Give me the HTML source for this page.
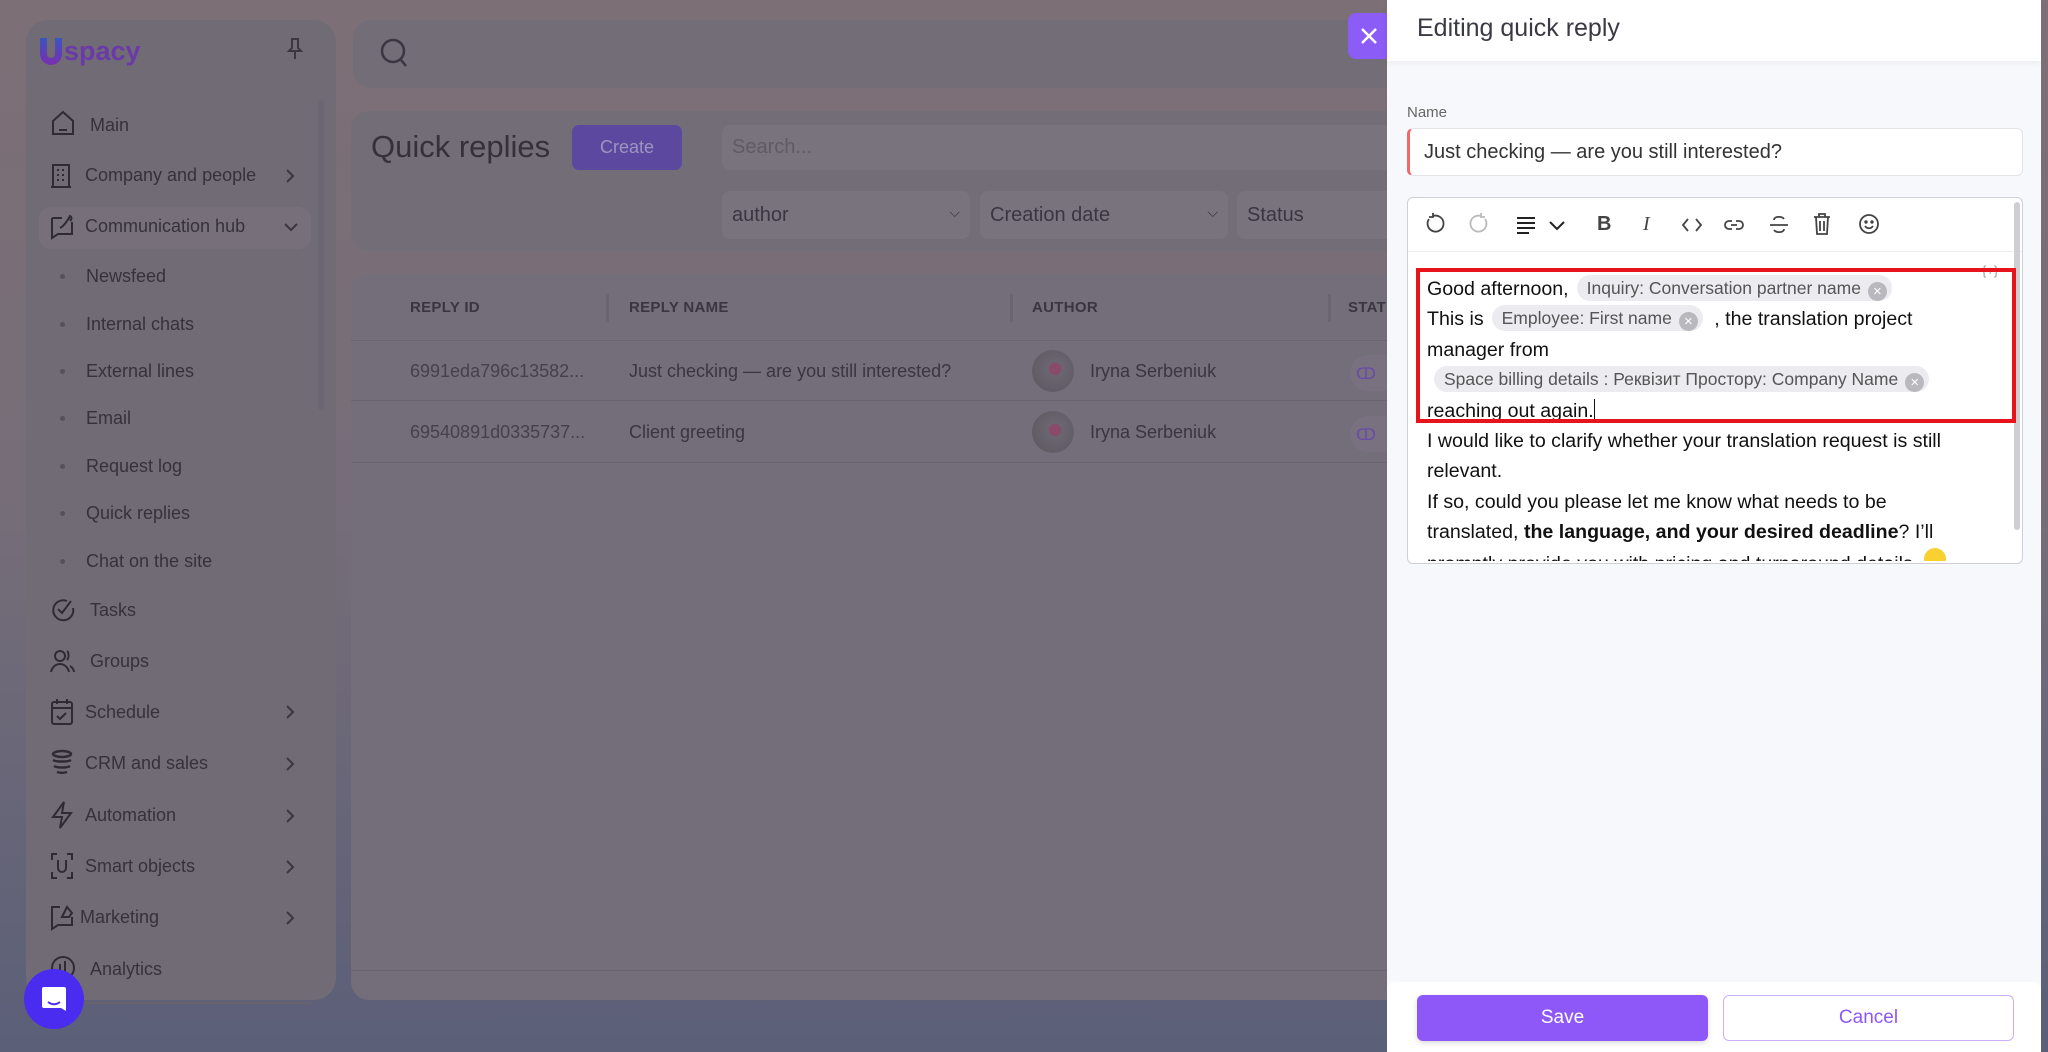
<!DOCTYPE html>
<html><head><meta charset="utf-8"><style>
*{box-sizing:border-box;margin:0;padding:0}
body{width:2048px;height:1052px;overflow:hidden;font-family:"Liberation Sans",sans-serif;background:linear-gradient(180deg,#7d6f76 0%,#756d78 50%,#5b5f78 100%);position:relative}
.abs{position:absolute}
.side{left:26px;top:20px;width:310px;height:980px;background:#716b75;border-radius:22px}
.it{position:absolute;left:85px;font-size:18px;color:#36313b;line-height:22px}
.sub{left:86px}
.dot{position:absolute;left:60px;width:5px;height:5px;border-radius:50%;background:#55505a}
.chev{position:absolute;left:285px}
.ico{position:absolute;left:50px}
.card{background:#736d77;border-radius:18px}
.th{position:absolute;top:299px;font-size:15px;color:#3a3641;font-weight:bold;letter-spacing:.3px}
.td{position:absolute;font-size:18px;color:#3a3641}
.sel{position:absolute;top:191px;height:48px;background:#79737d;border-radius:8px;font-size:20px;color:#3a3641;padding:13px 10px}
.panel{left:1387px;top:0;width:654px;height:1052px;background:#f7f8fb}
.tb{position:absolute;top:211px}
.ed{position:absolute;left:1427px;width:580px;font-size:19.6px;color:#111;line-height:30.5px}
.chip{display:inline-block;background:#ececf0;color:#555;border-radius:14px;font-size:17.5px;line-height:26px;padding:0 5px 0 10px;margin:0 6px 0 8px;vertical-align:1px}
.chip i{display:inline-block;width:19px;height:19px;border-radius:50%;background:#b8b8be;color:#fff;font-style:normal;font-size:15px;line-height:19px;text-align:center;margin-left:7px;vertical-align:-2px}
</style></head><body>
<!-- sidebar -->
<div class="abs side"></div>
<svg class="abs" style="left:38px;top:36px" width="26" height="30" viewBox="0 0 26 30"><defs><linearGradient id="g" x1="0" y1="0" x2="0" y2="1"><stop offset="0" stop-color="#3a55c0"/><stop offset="1" stop-color="#7a2fb0"/></linearGradient></defs><path d="M2 2h7v16a4 4 0 0 0 8 0V2h7v16a11 11 0 0 1-22 0z" fill="url(#g)"/></svg>
<div class="abs" style="left:64px;top:36px;font-size:27px;font-weight:bold;color:#6a3aa8">spacy</div>
<svg class="abs" style="left:285px;top:36px" width="20" height="26" viewBox="0 0 20 26" fill="none" stroke="#3b3640" stroke-width="2"><path d="M6 3h8M7 3v9l-3 3h12l-3-3V3M10 15v8"/></svg>
<div class="abs" style="left:318px;top:100px;width:6px;height:310px;background:#6a6674;border-radius:3px"></div>
<div class="abs" style="left:39px;top:207px;width:272px;height:42px;background:#77707a;border-radius:12px"></div>
<svg class="ico" style="top:110px" width="26" height="26" viewBox="0 0 26 26" fill="none" stroke="#2f2b33" stroke-width="2"><path d="M3 11L13 2l10 9v13H3z"/><path d="M9 20h8"/></svg>
<div class="it" style="left:90px;top:114px">Main</div>
<svg class="ico" style="top:163px" width="22" height="26" viewBox="0 0 22 26" fill="none" stroke="#2f2b33" stroke-width="2"><rect x="3" y="2" width="16" height="22"/><path d="M7 7h2M12 7h2M7 12h2M12 12h2M7 17h2M12 17h2M1 24h20"/></svg>
<div class="it" style="top:164px">Company and people</div><svg class="chev" style="top:168px" width="10" height="16" viewBox="0 0 10 16" fill="none" stroke="#3b3640" stroke-width="2"><path d="M2 2l6 6-6 6"/></svg>
<svg class="ico" style="top:212px" width="26" height="28" viewBox="0 0 26 28" fill="none" stroke="#2f2b33" stroke-width="2"><path d="M2 6h10M2 6v20l6-4h14V10"/><path d="M10 16c4-2 8-8 10-12 2 1 2 3 0 5"/></svg>
<div class="it" style="top:215px">Communication hub</div><svg class="chev" style="top:222px;left:283px" width="16" height="10" viewBox="0 0 16 10" fill="none" stroke="#3b3640" stroke-width="2"><path d="M2 2l6 6 6-6"/></svg>
<div class="dot" style="top:274px"></div><div class="it sub" style="top:265px">Newsfeed</div>
<div class="dot" style="top:322px"></div><div class="it sub" style="top:313px">Internal chats</div>
<div class="dot" style="top:369px"></div><div class="it sub" style="top:360px">External lines</div>
<div class="dot" style="top:416px"></div><div class="it sub" style="top:407px">Email</div>
<div class="dot" style="top:464px"></div><div class="it sub" style="top:455px">Request log</div>
<div class="dot" style="top:511px"></div><div class="it sub" style="top:502px">Quick replies</div>
<div class="dot" style="top:559px"></div><div class="it sub" style="top:550px">Chat on the site</div>
<svg class="ico" style="top:597px" width="26" height="26" viewBox="0 0 26 26" fill="none" stroke="#2f2b33" stroke-width="2"><path d="M23 11A10 10 0 1 1 17 4"/><path d="M8 12l4 4 9-12"/></svg>
<div class="it" style="left:90px;top:599px">Tasks</div>
<svg class="ico" style="top:648px" width="26" height="26" viewBox="0 0 26 26" fill="none" stroke="#2f2b33" stroke-width="2"><circle cx="10" cy="8" r="5"/><path d="M1 24c1-5 5-8 9-8s8 3 9 8M17 3c2 1 2 7 0 9M20 18c2 1 4 4 4 6"/></svg>
<div class="it" style="left:90px;top:650px">Groups</div>
<svg class="ico" style="top:698px" width="24" height="28" viewBox="0 0 24 28" fill="none" stroke="#2f2b33" stroke-width="2"><rect x="2" y="4" width="20" height="22" rx="2"/><path d="M2 10h20M7 1v5M17 1v5M7 18l3 3 6-6"/></svg>
<div class="it" style="top:701px">Schedule</div><svg class="chev" style="top:704px" width="10" height="16" viewBox="0 0 10 16" fill="none" stroke="#3b3640" stroke-width="2"><path d="M2 2l6 6-6 6"/></svg>
<svg class="ico" style="top:749px" width="24" height="28" viewBox="0 0 24 28" fill="none" stroke="#2f2b33" stroke-width="2.5"><ellipse cx="12" cy="5" rx="9" ry="3"/><path d="M3 11c3 2 15 2 18 0M4 17c3 2 13 2 16 0M7 23c3 1 7 1 10 0"/></svg>
<div class="it" style="top:752px">CRM and sales</div><svg class="chev" style="top:756px" width="10" height="16" viewBox="0 0 10 16" fill="none" stroke="#3b3640" stroke-width="2"><path d="M2 2l6 6-6 6"/></svg>
<svg class="ico" style="top:800px" width="24" height="30" viewBox="0 0 24 30" fill="none" stroke="#2f2b33" stroke-width="2"><path d="M14 2L3 17h9l-2 11 11-15h-9z"/></svg>
<div class="it" style="top:804px">Automation</div><svg class="chev" style="top:808px" width="10" height="16" viewBox="0 0 10 16" fill="none" stroke="#3b3640" stroke-width="2"><path d="M2 2l6 6-6 6"/></svg>
<svg class="ico" style="top:852px" width="24" height="28" viewBox="0 0 24 28" fill="none" stroke="#2f2b33" stroke-width="2"><path d="M2 8V2h5M17 2h5v6M2 20v6h5M17 26h5v-6M8 8v8a4 4 0 0 0 8 0V8"/></svg>
<div class="it" style="top:855px">Smart objects</div><svg class="chev" style="top:859px" width="10" height="16" viewBox="0 0 10 16" fill="none" stroke="#3b3640" stroke-width="2"><path d="M2 2l6 6-6 6"/></svg>
<svg class="ico" style="top:903px" width="26" height="28" viewBox="0 0 26 28" fill="none" stroke="#2f2b33" stroke-width="2"><path d="M10 4H2v22l6-4h14v-8"/><path d="M12 14l5-10 5 6-3 4z"/></svg>
<div class="it" style="left:80px;top:906px">Marketing</div><svg class="chev" style="top:910px" width="10" height="16" viewBox="0 0 10 16" fill="none" stroke="#3b3640" stroke-width="2"><path d="M2 2l6 6-6 6"/></svg>
<svg class="ico" style="top:955px" width="26" height="26" viewBox="0 0 26 26" fill="none" stroke="#2f2b33" stroke-width="2"><circle cx="13" cy="13" r="11"/><path d="M10 9v10M15 6v13"/></svg>
<div class="it" style="left:90px;top:958px">Analytics</div>
<div class="abs" style="left:65px;top:1002px;width:246px;height:2px;background:#66626e"></div>
<div class="abs" style="left:24px;top:969px;width:60px;height:60px;border-radius:50%;background:#4a2cf0"></div>
<svg class="abs" style="left:40px;top:985px" width="28" height="28" viewBox="0 0 28 28"><path d="M4 2h20a2 2 0 0 1 2 2v22l-5-3H4a2 2 0 0 1-2-2V4a2 2 0 0 1 2-2z" fill="#fff"/><path d="M8 17c4 3 8 3 12 0" stroke="#4a2cf0" stroke-width="2" fill="none"/></svg>

<!-- main -->
<div class="abs card" style="left:353px;top:20px;width:1100px;height:68px"></div>
<svg class="abs" style="left:380px;top:38px" width="30" height="32" viewBox="0 0 30 32" fill="none" stroke="#3a3641" stroke-width="2.5"><circle cx="13" cy="13" r="11"/><path d="M21 22l5 6"/></svg>
<div class="abs card" style="left:351px;top:111px;width:1100px;height:140px"></div>
<div class="abs" style="left:371px;top:129px;font-size:31px;color:#35313b">Quick replies</div>
<div class="abs" style="left:572px;top:125px;width:110px;height:45px;background:#5d48a0;border-radius:7px;color:#9d95c0;font-size:18px;text-align:center;line-height:45px">Create</div>
<div class="abs" style="left:722px;top:125px;width:700px;height:45px;background:#79737d;border-radius:8px;font-size:20px;color:#5f5b65;padding:11px 10px">Search...</div>
<div class="sel" style="left:722px;width:248px">author<span style="float:right;font-size:14px">⌵</span></div>
<div class="sel" style="left:980px;width:248px">Creation date<span style="float:right;font-size:14px">⌵</span></div>
<div class="sel" style="left:1237px;width:200px">Status</div>
<div class="abs" style="left:351px;top:274px;width:1040px;height:726px;background:#736e79;border-radius:18px 0 0 18px"></div>
<div class="abs" style="left:351px;top:340px;width:1040px;height:1px;background:#6a6570"></div>
<div class="abs" style="left:351px;top:400px;width:1040px;height:1px;background:#6a6570"></div>
<div class="abs" style="left:351px;top:462px;width:1040px;height:1px;background:#6a6570"></div>
<div class="abs" style="left:351px;top:970px;width:1040px;height:1px;background:#6a6570"></div>
<div class="abs" style="left:606px;top:294px;width:3px;height:28px;background:#6a6570"></div>
<div class="abs" style="left:1010px;top:294px;width:3px;height:28px;background:#6a6570"></div>
<div class="abs" style="left:1328px;top:294px;width:3px;height:28px;background:#6a6570"></div>
<div class="th" style="left:410px">REPLY ID</div>
<div class="th" style="left:629px">REPLY NAME</div>
<div class="th" style="left:1032px">AUTHOR</div>
<div class="th" style="left:1348px">STATUS</div>
<div class="td" style="left:410px;top:361px;color:#45414b">6991eda796c13582...</div>
<div class="td" style="left:629px;top:361px">Just checking — are you still interested?</div>
<div class="abs" style="left:1032px;top:350px;width:42px;height:42px;border-radius:50%;background:radial-gradient(circle at 55% 45%,#8a4a6a 0 18%,#6b6670 20%,#5a5660 100%)"></div>
<div class="td" style="left:1090px;top:361px">Iryna Serbeniuk</div>
<div class="td" style="left:410px;top:422px;color:#45414b">69540891d0335737...</div>
<div class="td" style="left:629px;top:422px">Client greeting</div>
<div class="abs" style="left:1032px;top:411px;width:42px;height:42px;border-radius:50%;background:radial-gradient(circle at 55% 45%,#8a4a6a 0 18%,#6b6670 20%,#5a5660 100%)"></div>
<div class="td" style="left:1090px;top:422px">Iryna Serbeniuk</div>
<div class="abs" style="left:1350px;top:355px;width:40px;height:36px;border-radius:18px 0 0 18px;background:#79717f"></div>
<div class="abs" style="left:1350px;top:416px;width:40px;height:36px;border-radius:18px 0 0 18px;background:#79717f"></div>
<div class="abs" style="left:1356px;top:364px;color:#6a4aa8;font-size:16px">ↀ</div>
<div class="abs" style="left:1356px;top:425px;color:#6a4aa8;font-size:16px">ↀ</div>

<!-- panel -->
<div class="abs" style="left:1348px;top:13px;width:45px;height:46px;background:#8b5cf6;border-radius:8px 0 0 8px"></div>
<svg class="abs" style="left:1359px;top:26px" width="20" height="20" viewBox="0 0 20 20" stroke="#fff" stroke-width="2.5"><path d="M3 3l14 14M17 3L3 17"/></svg>
<div class="abs panel"></div>
<div class="abs" style="left:1387px;top:0;width:654px;height:61px;background:#fff;box-shadow:0 2px 6px rgba(0,0,0,.05)"></div>
<div class="abs" style="left:1417px;top:14px;font-size:25px;color:#3a3a44">Editing quick reply</div>
<div class="abs" style="left:1407px;top:104px;font-size:15px;color:#666">Name</div>
<div class="abs" style="left:1407px;top:128px;width:616px;height:48px;background:#fff;border:1px solid #e3e3e8;border-left:3px solid #f06a6a;border-radius:6px;font-size:20px;color:#333;padding:12px 14px">Just checking — are you still interested?</div>
<div class="abs" style="left:1407px;top:197px;width:616px;height:367px;background:#fff;border:1px solid #cfd0d6;border-radius:6px;overflow:hidden">
 <div style="position:absolute;left:0;top:53px;width:100%;height:1px;background:#eee"></div>
 <div style="position:absolute;right:2px;top:4px;width:6px;height:328px;background:#cfcfd3;border-radius:3px"></div>
</div>
<svg class="tb" style="left:1423px;top:212px" width="24" height="24" viewBox="0 0 24 24" fill="none" stroke="#444" stroke-width="1.8"><path d="M6 7a8 8 0 1 0 4-3"/><path d="M10 1v4H6"/></svg>
<svg class="tb" style="left:1467px;top:212px" width="24" height="24" viewBox="0 0 24 24" fill="none" stroke="#bbb" stroke-width="1.8"><path d="M18 7a8 8 0 1 1-4-3"/><path d="M14 1v4h4"/></svg>
<svg class="tb" style="left:1514px;top:213px" width="24" height="24" viewBox="0 0 24 24" fill="none" stroke="#222" stroke-width="2"><path d="M3 5h18M3 10h18M3 15h18M3 20h12"/></svg>
<svg class="tb" style="left:1548px;top:216px" width="18" height="18" viewBox="0 0 18 18" fill="none" stroke="#222" stroke-width="2"><path d="M2 6l7 7 7-7"/></svg>
<div class="abs" style="left:1597px;top:213px;font-size:20px;font-weight:bold;color:#444">B</div>
<div class="abs" style="left:1643px;top:213px;font-size:20px;font-style:italic;font-family:'Liberation Serif',serif;color:#444">I</div>
<svg class="tb" style="left:1681px;top:215px" width="22" height="20" viewBox="0 0 22 20" fill="none" stroke="#444" stroke-width="1.8"><path d="M7 4l-5 6 5 6M15 4l5 6-5 6"/></svg>
<svg class="tb" style="left:1723px;top:215px" width="22" height="20" viewBox="0 0 22 20" fill="none" stroke="#444" stroke-width="1.8"><path d="M9 6H6a4 4 0 0 0 0 8h3M13 6h3a4 4 0 0 1 0 8h-3M8 10h6"/></svg>
<svg class="tb" style="left:1768px;top:213px" width="22" height="24" viewBox="0 0 22 24" fill="none" stroke="#444" stroke-width="1.8"><path d="M16 6c-2-3-10-3-10 1M6 17c2 3 10 3 10-1M2 12h18"/></svg>
<svg class="tb" style="left:1812px;top:212px" width="20" height="24" viewBox="0 0 20 24" fill="none" stroke="#444" stroke-width="1.8"><path d="M2 5h16M7 5V2h6v3M4 5l1 17h10l1-17M8 9v10M12 9v10"/></svg>
<svg class="tb" style="left:1858px;top:213px" width="22" height="22" viewBox="0 0 22 22" fill="none" stroke="#444" stroke-width="1.8"><circle cx="11" cy="11" r="9"/><circle cx="8" cy="9" r=".8" fill="#444"/><circle cx="14" cy="9" r=".8" fill="#444"/><path d="M7 13c2 3 6 3 8 0"/></svg>
<div class="abs" style="left:1982px;top:263px;font-size:13px;color:#999">{+}</div>
<div class="ed" style="top:274px">Good afternoon,<span class="chip">Inquiry: Conversation partner name<i>×</i></span></div>
<div class="ed" style="top:304px">This is<span class="chip">Employee: First name<i>×</i></span> , the translation project</div>
<div class="ed" style="top:335px">manager from</div>
<div class="ed" style="top:365px"><span class="chip" style="margin-left:7px">Space billing details : Реквізит Простору: Company Name<i>×</i></span></div>
<div class="ed" style="top:396px">reaching out again.<span style="display:inline-block;width:1px;height:22px;background:#111;vertical-align:-4px"></span></div>
<div class="abs" style="left:1416px;top:268px;width:600px;height:155px;border:4px solid #e8141c"></div>
<div class="abs" style="left:1420px;top:424px;width:596px;height:137px;overflow:hidden">
<div class="ed" style="left:7px;top:2px">I would like to clarify whether your translation request is still</div>
<div class="ed" style="left:7px;top:32px">relevant.</div>
<div class="ed" style="left:7px;top:63px">If so, could you please let me know what needs to be</div>
<div class="ed" style="left:7px;top:93px">translated, <b>the language, and your desired deadline</b>? I’ll</div>
<div class="ed" style="left:7px;top:124px">promptly provide you with pricing and turnaround details. <span style="display:inline-block;width:22px;height:22px;border-radius:50%;background:#f8d030"></span></div>
</div>
<div class="abs" style="left:1387px;top:982px;width:654px;height:70px;background:#fff;border-radius:8px 8px 0 0"></div>
<div class="abs" style="left:1417px;top:995px;width:291px;height:46px;background:#8e58f8;border-radius:6px;color:#fff;font-size:19px;text-align:center;line-height:46px;box-shadow:0 2px 6px rgba(0,0,0,.15)">Save</div>
<div class="abs" style="left:1723px;top:995px;width:291px;height:46px;background:#fff;border:1.5px solid #c9b0f8;border-radius:6px;color:#8e58f8;font-size:19px;text-align:center;line-height:43px">Cancel</div>
</body></html>
